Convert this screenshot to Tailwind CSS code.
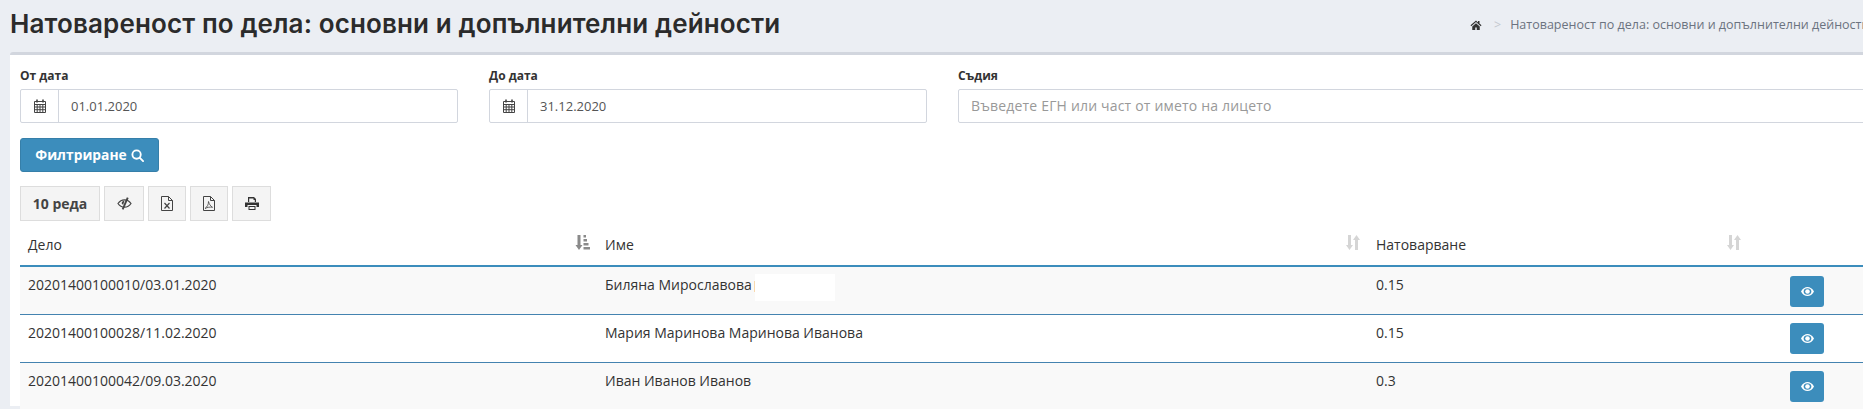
<!DOCTYPE html>
<html lang="bg">
<head>
  <meta charset="UTF-8" />
  <title>Натовареност по дела</title>
  <script src="https://cdn.jsdelivr.net/npm/@tailwindcss/browser@4"></script>
</head>
<body class="bg-[#ebeef3] font-['Open_Sans','Noto_Sans',sans-serif] text-[14px] text-[#333] overflow-hidden h-[409px] w-[1863px]">
  <!-- ЗАГЛАВИЕ -->
  <header class="h-[52px] flex items-center pl-[10px] pb-[5px]">
    <h1 lang="ru" class="font-['Inter',sans-serif] text-[26px] tracking-[0.13px] font-semibold text-[#2b2b2b] w-[1460px] shrink-0 whitespace-nowrap">Натовареност по дела: основни и допълнителни дейности</h1>
    <div class="flex items-center shrink-0 w-[393px] overflow-hidden whitespace-nowrap text-[12.500px] text-[#6b7380] pt-[3px]">
      <svg class="w-[12px] h-[12px] text-[#333] shrink-0" viewBox="0 0 24 24" fill="currentColor"><path d="M12 3 1 12.500l1.500 1.800L12 6.200l9.500 8.100 1.500-1.800-4-3.400V4h-3v2.900zM4.500 15v7h6v-5h3v5h6v-7L12 8.600z"/></svg>
      <span class="ml-[12px] mr-[9px] text-[#c4c8cf] shrink-0">&gt;</span>
      <span>Натовареност по дела: основни и допълнителни дейности</span>
    </div>
  </header>

  <main class="bg-white border-t-[3px] border-[#d2d6de] ml-[10px] rounded-tl-[3px] w-[1900px] h-[354px] pl-[10px]">
    <!-- ФИЛТРИ -->
    <div class="flex gap-[31px] pt-[12px]">
      <div class="w-[438px] shrink-0">
        <label class="block font-bold text-[12px] leading-[17px] mb-[5px]">От дата</label>
        <div class="flex h-[34px] border border-[#d2d6de] rounded-[2px]">
          <span class="w-[38px] flex items-center justify-center border-r border-[#d2d6de]">
            <svg class="w-[14px] h-[14px] text-[#444]" viewBox="0 0 14 14" fill="none" stroke="currentColor"><path d="M1.500 2.500h11v11h-11zM1.500 5.500h11M1.500 8h11M1.500 10.700h11M4.200 5.500v8M7 5.500v8M9.800 5.500v8"/><path d="M4 .5v3M10 .5v3" stroke-width="1.600"/></svg>
          </span>
          <span class="px-[12px] leading-[32px] text-[13px] text-[#555]">01.01.2020</span>
        </div>
      </div>
      <div class="w-[438px] shrink-0">
        <label class="block font-bold text-[12px] leading-[17px] mb-[5px]">До дата</label>
        <div class="flex h-[34px] border border-[#d2d6de] rounded-[2px]">
          <span class="w-[38px] flex items-center justify-center border-r border-[#d2d6de]">
            <svg class="w-[14px] h-[14px] text-[#444]" viewBox="0 0 14 14" fill="none" stroke="currentColor"><path d="M1.500 2.500h11v11h-11zM1.500 5.500h11M1.500 8h11M1.500 10.700h11M4.200 5.500v8M7 5.500v8M9.800 5.500v8"/><path d="M4 .5v3M10 .5v3" stroke-width="1.600"/></svg>
          </span>
          <span class="px-[12px] leading-[32px] text-[13px] text-[#555]">31.12.2020</span>
        </div>
      </div>
      <div class="w-[980px] shrink-0">
        <label class="block font-bold text-[12px] leading-[17px] mb-[5px]">Съдия</label>
        <div class="h-[34px] border border-[#d2d6de] rounded-[2px] px-[12px] leading-[32px] text-[14px] tracking-[0.18px] text-[#999]">Въведете ЕГН или част от името на лицето</div>
      </div>
    </div>

    <button class="mt-[15px] w-[139px] h-[34px] flex items-center justify-center gap-[4px] bg-[#3c8dbc] border border-[#367fa9] rounded-[3px] text-white font-bold text-[13.800px]">
      Филтриране
      <svg class="w-[13px] h-[13px]" viewBox="0 0 14 14" fill="none" stroke="currentColor" stroke-width="2"><circle cx="6" cy="6" r="4.500"/><path d="m9.500 9.500 3.500 3.500" stroke-linecap="round"/></svg>
    </button>

    <!-- ЛЕНТА С БУТОНИ -->
    <div class="flex gap-[4px] mt-[14px]">
      <button class="w-[80px] h-[35px] bg-[#f4f4f4] border border-[#ddd] font-bold text-[14px] text-[#444]">10 реда</button>
      <button class="w-[40px] h-[35px] bg-[#f4f4f4] border border-[#ddd] flex items-center justify-center">
        <svg class="w-[15px] h-[13px] text-[#444]" viewBox="0 0 16 14" fill="none" stroke="currentColor" stroke-width="1.300"><path d="M1 7c2-3 4-4 7-4s5 1 7 4c-2 3-4 4-7 4S3 10 1 7z"/><path d="M11.500 .8 6 13.200" stroke-width="2"/><path d="M5 7a3 3 0 0 1 3-3l-1.500 4.500" fill="currentColor" stroke="none"/></svg>
      </button>
      <button class="w-[38px] h-[35px] bg-[#f4f4f4] border border-[#ddd] flex items-center justify-center">
        <svg class="w-[12px] h-[15px] text-[#444]" viewBox="0 0 12 15" fill="none" stroke="currentColor"><path d="M.5.500h7l4 4v10h-11zM7.500.500v4h4"/><path d="m3.500 7 5 5.500M8.500 7l-5 5.500" stroke-width="1.200"/></svg>
      </button>
      <button class="w-[38px] h-[35px] bg-[#f4f4f4] border border-[#ddd] flex items-center justify-center">
        <svg class="w-[12px] h-[15px] text-[#444]" viewBox="0 0 12 15" fill="none" stroke="currentColor"><path d="M.5.500h7l4 4v10h-11zM7.500.500v4h4"/><path d="M5.500 5.500c0 3-1 5-3.500 7 2.500-1.300 5-1.700 7.500-1.200C7.500 10 6 8 5.500 5.500z" stroke-width=".8"/></svg>
      </button>
      <button class="w-[39px] h-[35px] bg-[#f4f4f4] border border-[#ddd] flex items-center justify-center">
        <svg class="w-[14px] h-[13px] text-[#333]" viewBox="0 0 14 13" fill="currentColor"><path d="M3 0h6l2 2v3H9.800V3H8.500V1.500h-4.300V5H3zM0 5.500h14V10h-2.500V8H2.500v2H0zM3.500 9h7v4h-7zM4.500 10v2h5v-2z" fill-rule="evenodd"/></svg>
      </button>
    </div>

    <!-- ТАБЛИЦА -->
    <table class="table-fixed w-[1853px] border-collapse">
      <colgroup>
        <col class="w-[578px]" /><col class="w-[771px]" /><col class="w-[380px]" /><col />
      </colgroup>
      <thead>
        <tr class="h-[45px] border-b-2 border-[#3c8dbc]">
          <th class="text-left font-normal pl-[8px] pt-[2px] relative">Дело
            <svg class="absolute right-[8px] top-[14px] w-[15px] h-[15px] text-[#8a8a8a]" viewBox="0 0 15 15" fill="currentColor"><path d="M2.500 0h3v10h2L4 15 .5 10h2zM8.500 0h2.500v2.500H8.500zM8.500 4H12v2.500H8.500zM8.500 8H13.500v2.500H8.500zM8.500 12H15v2.500H8.500z"/></svg>
          </th>
          <th class="text-left font-medium pl-[7px] pt-[2px] relative">Име
            <svg class="absolute right-[9px] top-[14px] w-[14px] h-[15px] text-[#d5d5d5]" viewBox="0 0 14 15" fill="currentColor"><path d="M2 0h3v10h2L3.500 15 0 10h2zM9 15V5H7l3.500-5L14 5h-2v10z"/></svg>
          </th>
          <th class="text-left font-normal pl-[7px] pt-[2px] relative">Натоварване
            <svg class="absolute right-[8px] top-[14px] w-[14px] h-[15px] text-[#d5d5d5]" viewBox="0 0 14 15" fill="currentColor"><path d="M2 0h3v10h2L3.500 15 0 10h2zM9 15V5H7l3.500-5L14 5h-2v10z"/></svg>
          </th>
          <th></th>
        </tr>
      </thead>
      <tbody>
        <tr class="h-[48px] bg-[#f9f9f9] border-b border-[#4483b0] align-top">
          <td class="pl-[8px] pt-[7px]">20201400100010/03.01.2020</td>
          <td class="pl-[7px] pt-[7px] relative">Биляна Мирославова
            <span class="absolute left-[156px] top-[14px] w-[1px] h-[11px] bg-[#f8d9ae]"></span>
            <span class="absolute left-[157px] top-[7px] w-[80px] h-[27px] bg-white"></span>
          </td>
          <td class="pl-[7px] pt-[7px]">0.15</td>
          <td class="pl-[41px] pt-[9px]">
            <button class="w-[34px] h-[31px] flex items-center justify-center bg-[#3c8dbc] rounded-[3px]">
              <svg class="w-[13px] h-[9px] text-white" viewBox="0 0 13 9" fill="currentColor"><path fill-rule="evenodd" d="M0 4.500C1.500 1.500 4 0 6.500 0S11.500 1.500 13 4.500C11.500 7.500 9 9 6.500 9S1.500 7.500 0 4.500zm6.500-3.300c-1 0-2 .2-2.800.8a3.400 3.400 0 0 0 0 5c.8.600 1.800.8 2.800.8s2-.2 2.800-.8a3.400 3.400 0 0 0 0-5c-.8-.6-1.800-.8-2.800-.8z"/><circle cx="6.500" cy="4.500" r="2.300"/></svg>
            </button>
          </td>
        </tr>
        <tr class="h-[48px] bg-white border-b border-[#4483b0] align-top">
          <td class="pl-[8px] pt-[7px]">20201400100028/11.02.2020</td>
          <td class="pl-[7px] pt-[7px]">Мария Маринова Маринова Иванова</td>
          <td class="pl-[7px] pt-[7px]">0.15</td>
          <td class="pl-[41px] pt-[8px]">
            <button class="w-[34px] h-[31px] flex items-center justify-center bg-[#3c8dbc] rounded-[3px]">
              <svg class="w-[13px] h-[9px] text-white" viewBox="0 0 13 9" fill="currentColor"><path fill-rule="evenodd" d="M0 4.500C1.500 1.500 4 0 6.500 0S11.500 1.500 13 4.500C11.500 7.500 9 9 6.500 9S1.500 7.500 0 4.500zm6.500-3.300c-1 0-2 .2-2.800.8a3.400 3.400 0 0 0 0 5c.8.600 1.800.8 2.800.8s2-.2 2.800-.8a3.400 3.400 0 0 0 0-5c-.8-.6-1.800-.8-2.800-.8z"/><circle cx="6.500" cy="4.500" r="2.300"/></svg>
            </button>
          </td>
        </tr>
        <tr class="h-[48px] bg-[#f9f9f9] align-top">
          <td class="pl-[8px] pt-[7px]">20201400100042/09.03.2020</td>
          <td class="pl-[7px] pt-[7px]">Иван Иванов Иванов</td>
          <td class="pl-[7px] pt-[7px]">0.3</td>
          <td class="pl-[41px] pt-[8px]">
            <button class="w-[34px] h-[31px] flex items-center justify-center bg-[#3c8dbc] rounded-[3px]">
              <svg class="w-[13px] h-[9px] text-white" viewBox="0 0 13 9" fill="currentColor"><path fill-rule="evenodd" d="M0 4.500C1.500 1.500 4 0 6.500 0S11.500 1.500 13 4.500C11.500 7.500 9 9 6.500 9S1.500 7.500 0 4.500zm6.500-3.300c-1 0-2 .2-2.800.8a3.400 3.400 0 0 0 0 5c.8.600 1.800.8 2.800.8s2-.2 2.800-.8a3.400 3.400 0 0 0 0-5c-.8-.6-1.800-.8-2.800-.8z"/><circle cx="6.500" cy="4.500" r="2.300"/></svg>
            </button>
          </td>
        </tr>
      </tbody>
    </table>
  </main>
</body>
</html>
